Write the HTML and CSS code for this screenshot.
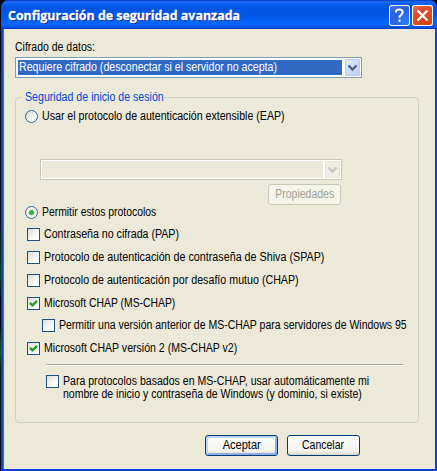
FILE: index.html
```html
<!DOCTYPE html>
<html lang="es">
<head>
<meta charset="utf-8">
<title>Configuración de seguridad avanzada</title>
<link rel="stylesheet" href="styles.css">
</head>
<body>
<div class="window">
  <header class="titlebar">
    <h1 class="title">Configuración de seguridad avanzada</h1>
    <span class="cap help"><svg width="21" height="21" viewBox="0 0 21 21"><path d="M7 7.5V6.2Q7.6 4.5 10.3 4.5Q13.7 4.5 13.7 7.3Q13.7 8.7 12 10Q10.5 11 10.5 12.8M10.5 14.5V17" fill="none" stroke="#fff" stroke-width="2"/></svg></span>
    <span class="cap close"><svg width="21" height="21" viewBox="0 0 21 21"><path d="M5.5 5.5L15.5 15.5M15.5 5.5L5.5 15.5" stroke="#fff" stroke-width="2.3"/></svg></span>
  </header>
  <main class="content">
    <label class="field-label"><span class="t k875">Cifrado de datos:</span></label>
    <div class="select">
      <div class="value"><span class="t k885">Requiere cifrado (desconectar si el servidor no acepta)</span></div>
      <span class="arrow"><svg width="15" height="17" viewBox="0 0 15 17"><path d="M3.5 6.5L7.5 10.5L11.5 6.5" fill="none" stroke="#4d6185" stroke-width="2.4"/></svg></span>
    </div>
    <section class="group">
      <h2 class="legend"><span class="t k885">Seguridad de inicio de sesión</span></h2>
      <div class="row eap"><i class="radio"></i><span class="t k885">Usar el protocolo de autenticación extensible (EAP)</span></div>
      <div class="select disabled">
        <div class="value"></div>
        <span class="arrow"><svg width="15" height="17" viewBox="0 0 15 17"><path d="M3.5 6.5L7.5 10.5L11.5 6.5" fill="none" stroke="#c9c7ba" stroke-width="2.4"/></svg></span>
      </div>
      <button class="btn props" disabled><span class="t k875">Propiedades</span></button>
      <div class="row allow"><i class="radio on"></i><span class="t k865">Permitir estos protocolos</span></div>
      <div class="checks">
        <div class="row"><i class="check"></i><span class="t k885">Contraseña no cifrada (PAP)</span></div>
        <div class="row"><i class="check"></i><span class="t k895">Protocolo de autenticación de contraseña de Shiva (SPAP)</span></div>
        <div class="row"><i class="check"></i><span class="t k89">Protocolo de autenticación por desafío mutuo (CHAP)</span></div>
        <div class="row"><i class="check"><svg width="11" height="11" viewBox="0 0 11 11"><path d="M2 4.8L4.5 7.3L9 2.8" fill="none" stroke="#21a121" stroke-width="2.5"/></svg></i><span class="t k865">Microsoft CHAP (MS-CHAP)</span></div>
        <div class="row sub"><i class="check"></i><span class="t k875">Permitir una versión anterior de MS-CHAP para servidores de Windows 95</span></div>
        <div class="row"><i class="check"><svg width="11" height="11" viewBox="0 0 11 11"><path d="M2 4.8L4.5 7.3L9 2.8" fill="none" stroke="#21a121" stroke-width="2.5"/></svg></i><span class="t k88">Microsoft CHAP versión 2 (MS-CHAP v2)</span></div>
      </div>
      <div class="rule"></div>
      <div class="row auto"><i class="check"></i><p class="note"><span class="t k88">Para protocolos basados en MS-CHAP, usar automáticamente mi</span><span class="t k875">nombre de inicio y contraseña de Windows (y dominio, si existe)</span></p></div>
    </section>
    <footer class="actions">
      <button class="btn default"><span class="t k92">Aceptar</span></button>
      <button class="btn"><span class="t k875">Cancelar</span></button>
    </footer>
  </main>
</div>
</body>
</html>
```
FILE: styles.css
```css
* { box-sizing: border-box; }
body {
  margin: 0;
  width: 437px;
  height: 471px;
  overflow: hidden;
  background: linear-gradient(#000 0 72px, #0b0d0b 72px 225px, #06240f 240px, #0c3c1c 275px, #000 300px 325px, #1c5a20 350px, #061a08 370px, #0a0a0a);
  font: 12px/13px "Liberation Sans", Arial, sans-serif;
  color: #000;
}
h1, h2, p { margin: 0; font-weight: normal; font-size: inherit; }
svg { display: block; }
.window {
  display: flex;
  flex-direction: column;
  width: 436px;
  height: 471px;
  margin-left: 1px;
  border-radius: 8px 8px 0 0;
  overflow: hidden;
  background: #0a3fe0;
}
.titlebar {
  display: flex;
  flex: none;
  height: 29px;
  padding: 5px 4px 0 7px;
  background: linear-gradient(#0a3cc0 0, #1c6cf4 2px, #0a5ff0 4px, #0255e2 8px, #0257e8 16px, #0366fb 22px, #0265fc 25px, #014ad8 28px, #0138b8 29px);
}
.title {
  flex: 1;
  font: bold 13px/21px "Open Sans", sans-serif;
  color: #fff;
  white-space: nowrap;
  text-shadow: 1px 1px 0 #0a1e83;
  -webkit-text-stroke: .3px #fff;
  transform: scaleX(.955);
  transform-origin: left;
}
.cap {
  width: 21px;
  height: 21px;
  border-radius: 3px;
  box-shadow: inset 0 0 0 1px #fff;
}
.help { background: radial-gradient(circle at 75% 80%, #2c7bf6, #2a5fe0 60%, #4a78e8); }
.close { margin-left: 2px; background: radial-gradient(circle at 70% 80%, #d8400e, #dc4f2b 60%, #ea8468); }
.content {
  flex: 1;
  margin: 0 2px 2px 3px;
  padding: 12px 0 0 11px;
  background: #ece9d8;
  box-shadow: -1px 0 #2c6cf4;
}
.t {
  display: block;
  white-space: nowrap;
  transform-origin: left;
}
.k865 { transform: scaleX(.865); }
.k875 { transform: scaleX(.875); }
.k88 { transform: scaleX(.88); }
.k885 { transform: scaleX(.885); }
.k89 { transform: scaleX(.89); }
.k895 { transform: scaleX(.895); }
.k92 { transform: scaleX(.92); }
.field-label { display: block; height: 16px; }
.select {
  display: flex;
  justify-content: space-between;
  width: 347px;
  height: 21px;
  padding: 1px;
  border: 1px solid #7f9db9;
  background: #fff;
}
.value {
  width: 324px;
  height: 15px;
  margin: 1px;
  padding: 1px;
  color: #fff;
  background: #316ac5;
}
.arrow {
  width: 15px;
  height: 17px;
  border-radius: 2px;
  background: linear-gradient(135deg, #e1eafe, #b9ccf8);
  box-shadow: inset 0 0 0 1px #b9cbf3;
}
.group {
  width: 404px;
  height: 326px;
  margin-top: 19px;
  border: 1px solid #d0d0bf;
  border-radius: 4px;
}
.legend {
  width: 142px;
  height: 13px;
  margin: -7px 0 0 6px;
  padding-left: 3px;
  background: #ece9d8;
  color: #0046d5;
}
.row { display: flex; height: 13px; }
.eap { margin: 6px 0 0 9px; }
.allow { margin: 1px 0 0 9px; }
.radio {
  flex: none;
  width: 13px;
  height: 13px;
  margin-right: 3.5px;
  border: 1px solid #3b6289;
  border-radius: 50%;
  background: linear-gradient(135deg, #dcdcd7, #fff);
}
.radio.on { background: radial-gradient(circle, #35b835 0 2px, #a5d8a3 2.7px, #f6f6f2 3.3px); }
.disabled {
  width: 302px;
  margin: 36px 0 0 24px;
  border-color: #c9c7ba;
}
.disabled .value { width: 281px; height: 17px; margin: 0; background: #ece9d8; }
.disabled .arrow { background: #f0efe5; box-shadow: inset 0 0 0 1px #e5e3d5; }
.btn {
  display: flex;
  justify-content: center;
  align-items: center;
  width: 73px;
  height: 21px;
  padding: 0;
  border: 1px solid #003c74;
  border-radius: 3px;
  background: linear-gradient(#fff, #f3f2ec 80%, #d9d4c7);
  font: inherit;
  color: #000;
}
.btn .t { transform-origin: center; }
.default { box-shadow: inset 2px 2px #bcd4f6, inset -2px -2px #8fadea; }
.props {
  margin: 4px 0 0 252px;
  border-color: #c9c7ba;
  background: #f5f4ea;
  color: #a1a192;
}
.checks {
  display: flex;
  flex-direction: column;
  gap: 10px;
  margin: 9px 0 0 11px;
}
.sub { margin: -1px 0 0 15px; }
.check {
  flex: none;
  width: 13px;
  height: 13px;
  margin-right: 3.5px;
  border: 1px solid #1c5180;
  background: linear-gradient(135deg, #dcdcd7, #fff 75%);
}
.rule {
  width: 357px;
  height: 2px;
  margin: 9px 0 0 30px;
  border-top: 1px solid #aca899;
  border-bottom: 1px solid #fff;
}
.auto { margin: 9px 0 0 30px; }
.actions {
  display: flex;
  gap: 9px;
  margin: 12px 0 0 190px;
}
```
